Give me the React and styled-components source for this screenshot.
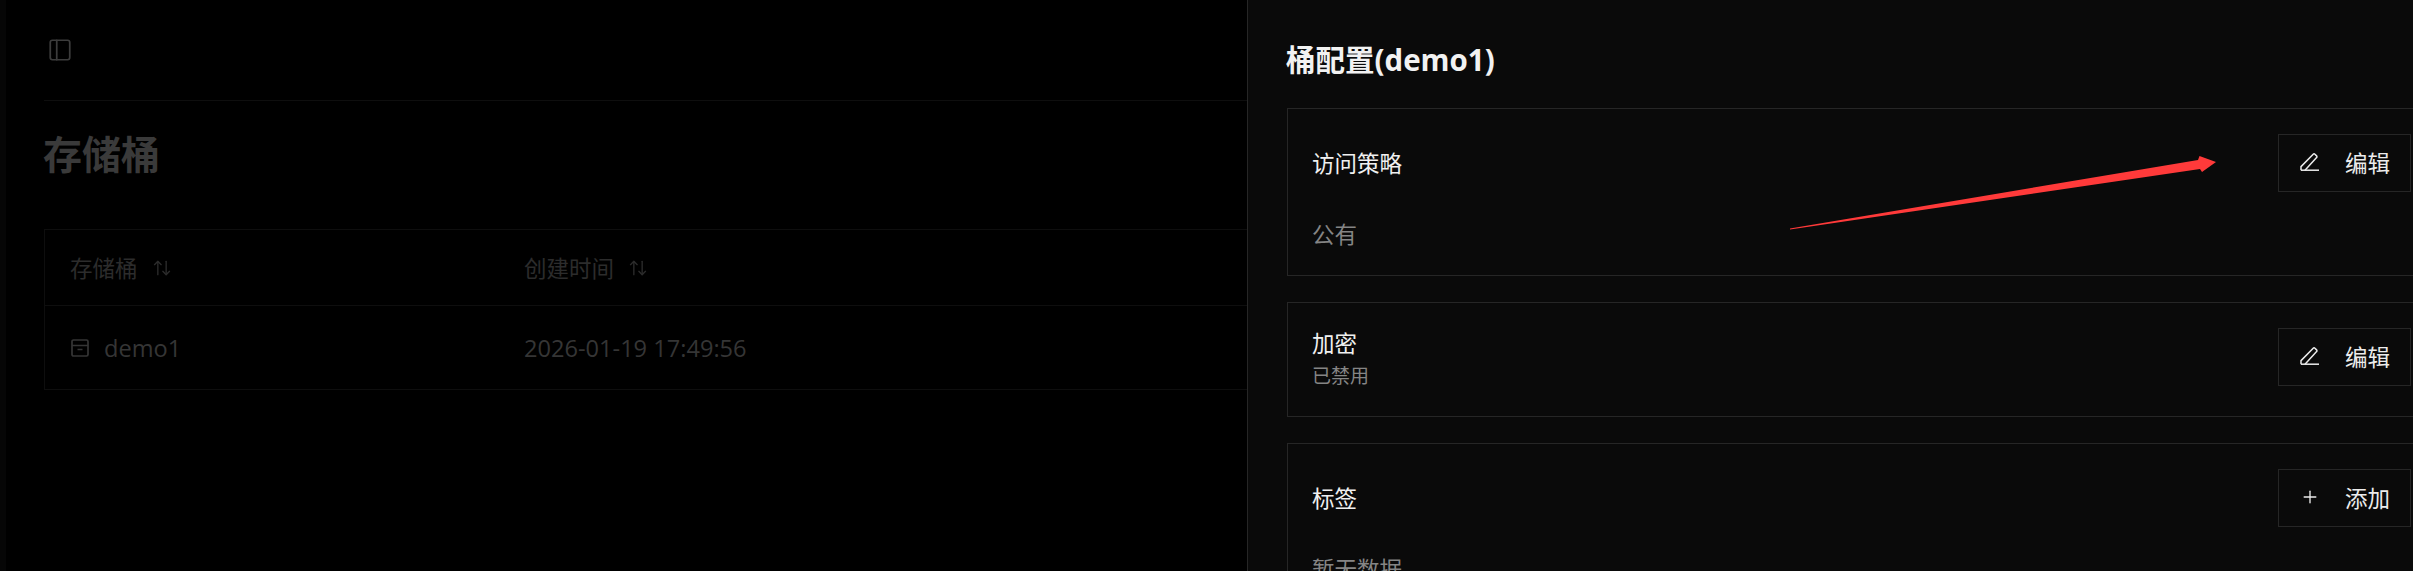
import React from "react";
import styled, { createGlobalStyle } from "styled-components";
import { ArrowUpDown, PanelLeft, Plus } from "lucide-react";

const GlobalStyle = createGlobalStyle`
  html,
  body {
    margin: 0;
    background: #000;
    overflow: hidden;
  }
  * {
    box-sizing: border-box;
  }
`;

const Page = styled.div`
  position: relative;
  display: flex;
  width: 2413px;
  height: 571px;
  overflow: hidden;
  background: #000;
  font-family: "Open Sans", "Noto Sans CJK SC", sans-serif;
`;

const Rail = styled.div`
  flex: none;
  width: 6px;
  background: #060606;
`;

const Main = styled.main`
  flex: 1;
  min-width: 0;
  padding-left: 38px;
`;

const TopBar = styled.div`
  display: flex;
  align-items: center;
  height: 101px;
  padding-left: 3px;
  border-bottom: 1px solid #0e0e0e;
  color: #3c3c3c;
`;

const Heading = styled.h1`
  margin: 24px 0 47px -1px;
  font-size: 39px;
  line-height: 57px;
  font-weight: 700;
  color: #3a3a3a;
`;

const Table = styled.div`
  border: 1px solid #0e0e0e;
  border-right: 0;
`;

const Row = styled.div`
  display: grid;
  grid-template-columns: 454px 1fr;
  align-items: center;
  height: ${(props) => props.$height}px;
  padding-left: 25px;
  border-bottom: ${(props) => (props.$divider ? "1px solid #0e0e0e" : "0")};
  font-size: 22.5px;
  color: ${(props) => props.$color};
`;

const Cell = styled.div`
  display: flex;
  align-items: center;
  gap: ${(props) => props.$gap}px;
  white-space: nowrap;
`;

const LatinText = styled.span`
  font-size: 23.6px;
`;

const Panel = styled.aside`
  flex: none;
  width: 1166px;
  padding: 39px 0 0 39px;
  overflow: hidden;
  background: #0a0a0a;
  border-left: 1px solid #262626;
`;

const PanelTitle = styled.h2`
  margin: 0 0 27px -1px;
  font-size: 29.5px;
  line-height: 42px;
  font-weight: 700;
  color: #f2f2f2;
  white-space: nowrap;
`;

const CardList = styled.div`
  display: flex;
  flex-direction: column;
  gap: 26px;
  width: 1150px;
`;

const Card = styled.section`
  padding: 25px 25px ${(props) => props.$bottom}px 24px;
  border: 1px solid #262626;
`;

const CardHead = styled.div`
  display: flex;
  justify-content: space-between;
  align-items: ${(props) => (props.$top ? "flex-start" : "center")};
`;

const CardTitle = styled.div`
  font-size: 22.5px;
  line-height: ${(props) => props.$line || 33}px;
  color: #f0f0f0;
`;

const CardText = styled.div`
  margin-top: ${(props) => props.$top}px;
  font-size: ${(props) => props.$size}px;
  line-height: ${(props) => props.$line}px;
  color: #858585;
`;

const Button = styled.button`
  display: flex;
  align-items: center;
  gap: 25px;
  height: 58px;
  padding: 0 20px 2px 21px;
  border: 1px solid #262626;
  background: transparent;
  font-family: inherit;
  font-size: 22.5px;
  color: #ececec;
`;

const Annotation = styled.svg`
  position: absolute;
  left: 1785px;
  top: 150px;
`;

const EditIcon = () => (
  <svg width="20" height="20" viewBox="0 0 20 20" fill="none" stroke="currentColor" strokeWidth="1.5">
    <path d="M1 18.2h18" />
    <path d="M1 18.2v-3.6L13.2 2.2a1.2 1.2 0 0 1 1.7 0l1.7 1.7a1.2 1.2 0 0 1 0 1.7L5 18.2" />
  </svg>
);

const BucketIcon = () => (
  <svg width="20" height="20" viewBox="0 0 20 20" fill="none" stroke="currentColor" strokeWidth="1.7">
    <rect x="2" y="2" width="16" height="16" rx="1.5" />
    <path d="M2 7.5h16M7.5 11.5h5" />
  </svg>
);

function App() {
  return (
    <Page>
      <GlobalStyle />
      <Rail />
      <Main>
        <TopBar>
          <PanelLeft size={26} strokeWidth={1.6} />
        </TopBar>
        <Heading>存储桶</Heading>
        <Table>
          <Row $height={76} $divider $color="#2c2c2c">
            <Cell $gap={14}>
              存储桶
              <ArrowUpDown size={20} strokeWidth={1.6} />
            </Cell>
            <Cell $gap={14}>
              创建时间
              <ArrowUpDown size={20} strokeWidth={1.6} />
            </Cell>
          </Row>
          <Row $height={83} $color="#353535">
            <Cell $gap={14}>
              <BucketIcon />
              <LatinText>demo1</LatinText>
            </Cell>
            <Cell>
              <LatinText>2026-01-19 17:49:56</LatinText>
            </Cell>
          </Row>
        </Table>
      </Main>
      <Panel>
        <PanelTitle>桶配置(demo1)</PanelTitle>
        <CardList>
          <Card $bottom={24}>
            <CardHead>
              <CardTitle>访问策略</CardTitle>
              <Button>
                <EditIcon />
                编辑
              </Button>
            </CardHead>
            <CardText $top={26} $size={22.5} $line={33}>
              公有
            </CardText>
          </Card>
          <Card $bottom={25}>
            <CardHead $top>
              <div>
                <CardTitle $line={31}>加密</CardTitle>
                <CardText $top={2} $size={19} $line={30}>
                  已禁用
                </CardText>
              </div>
              <Button>
                <EditIcon />
                编辑
              </Button>
            </CardHead>
          </Card>
          <Card $bottom={24}>
            <CardHead>
              <CardTitle>标签</CardTitle>
              <Button>
                <Plus size={20} strokeWidth={1.6} />
                添加
              </Button>
            </CardHead>
            <CardText $top={26} $size={22.5} $line={33}>
              暂无数据
            </CardText>
          </Card>
        </CardList>
      </Panel>
      <Annotation width="440" height="90" viewBox="0 0 440 90">
        <path
          d="M5 78.5 L413 10 L414.5 6 L431 12 L417 22 L415 19 L5 79.5 Z"
          fill="#ff3a3a"
        />
      </Annotation>
    </Page>
  );
}

export default App;
